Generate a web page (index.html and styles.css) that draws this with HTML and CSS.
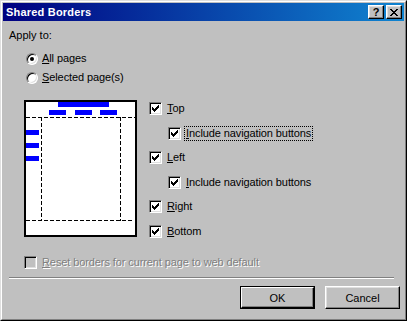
FILE: index.html
```html
<!DOCTYPE html>
<html>
<head>
<meta charset="utf-8">
<link rel="stylesheet" href="styles.css">
</head>
<body>
<div class="window">
  <div class="frame">
    <div class="titlebar">
      <span class="title">Shared Borders</span>
      <div class="tb-buttons">
        <span class="tb-btn help">?</span>
        <span class="tb-btn close"><svg width="8" height="7" viewBox="0 0 8 7" shape-rendering="crispEdges"><path d="M0 0h2v1h-2zM6 0h2v1h-2zM1 1h2v1h-2zM5 1h2v1h-2zM2 2h4v1h-4zM3 3h2v1h-2zM2 4h4v1h-4zM1 5h2v1h-2zM5 5h2v1h-2zM0 6h2v1h-2zM6 6h2v1h-2z" fill="#000"/></svg></span>
      </div>
    </div>
    <div class="client">
      <div class="label">Apply to:</div>
      <div class="radios">
        <div class="row"><span class="radio checked"></span><span class="txt"><u>A</u>ll pages</span></div>
        <div class="row"><span class="radio"></span><span class="txt"><u>S</u>elected page(s)</span></div>
      </div>
      <div class="main">
        <div class="preview">
          <div class="bar big"></div>
          <div class="bar sm s1"></div>
          <div class="bar sm s2"></div>
          <div class="bar sm s3"></div>
          <div class="hd top"></div>
          <div class="hd bottom"></div>
          <div class="vd left"></div>
          <div class="vd right"></div>
          <div class="bar lb l1"></div>
          <div class="bar lb l2"></div>
          <div class="bar lb l3"></div>
        </div>
        <div class="checks">
          <div class="row r1"><span class="cb on"></span><span class="txt"><u>T</u>op</span></div>
          <div class="row r2 indent"><span class="cb on"></span><span class="txt focus"><u>I</u>nclude navigation buttons</span></div>
          <div class="row r3"><span class="cb on"></span><span class="txt"><u>L</u>eft</span></div>
          <div class="row r4 indent"><span class="cb on"></span><span class="txt"><u>I</u>nclude navigation buttons</span></div>
          <div class="row r5"><span class="cb on"></span><span class="txt"><u>R</u>ight</span></div>
          <div class="row r6"><span class="cb on"></span><span class="txt"><u>B</u>ottom</span></div>
        </div>
      </div>
      <div class="row reset"><span class="cb disabled"></span><span class="txt dis"><u>R</u>eset borders for current page to web default</span></div>
      <div class="separator"></div>
      <div class="buttons">
        <div class="btn default"><span class="btn-in">OK</span></div>
        <div class="btn"><span class="btn-in">Cancel</span></div>
      </div>
    </div>
  </div>
</div>
</body>
</html>
```
FILE: styles.css
```css
* { box-sizing: border-box; }
html, body { margin: 0; padding: 0; }
body {
  width: 407px; height: 321px; overflow: hidden;
  font-family: "Liberation Sans", Arial, sans-serif;
  font-size: 11px; color: #000; background: #c0c0c0;
}
.window {
  width: 407px; height: 321px;
  border: 1px solid; border-color: #dfdfdf #000 #000 #dfdfdf;
}
.frame {
  height: 100%;
  border: 1px solid; border-color: #fff #808080 #808080 #fff;
  padding: 1px; background: #c0c0c0;
}
.titlebar {
  height: 18px;
  background: linear-gradient(to right, #000080, #1084d0);
  display: flex; align-items: center; justify-content: space-between;
  padding: 0 2px 0 3px;
}
.title { color: #fff; font-weight: bold; font-size: 11px; letter-spacing: 0.2px; }
.tb-buttons { display: flex; gap: 2px; }
.tb-btn {
  width: 16px; height: 14px; background: #c0c0c0;
  border: 1px solid; border-color: #fff #000 #000 #fff;
  box-shadow: inset -1px -1px #808080, inset 1px 1px #dfdfdf;
  display: flex; align-items: center; justify-content: center;
  font-weight: bold; font-size: 11px; line-height: 12px;
}
.client { padding: 8px 0 0 6px; position: relative; height: 297px; }
.label { height: 13px; line-height: 13px; }
.txt { letter-spacing: -0.1px; }
.row { display: flex; align-items: center; height: 13px; line-height: 13px; white-space: nowrap; }
.radios { margin-top: 10px; padding-left: 17px; display: flex; flex-direction: column; gap: 6px; }
.radio {
  width: 12px; height: 12px; border-radius: 50%; flex: none;
  border: 1px solid; border-color: #808080 #fff #fff #808080;
  background: #fff;
  box-shadow: inset 1px 1px #000, inset -1px -1px #dfdfdf;
  margin-right: 4px; position: relative;
}
.radio.checked::after {
  content: ""; position: absolute; left: 3px; top: 3px;
  width: 4px; height: 4px; border-radius: 50%; background: #000;
}
.main { display: flex; margin-top: 16px; padding-left: 15px; }
.preview {
  width: 113px; height: 137px; border: 2px solid #000; background: #fff;
  position: relative; flex: none;
}
.bar { position: absolute; background: #0000ff; height: 5px; }
.big { left: 32px; top: 0; width: 51px; }
.sm { top: 8px; width: 17px; }
.s1 { left: 23px; } .s2 { left: 49px; } .s3 { left: 74px; }
.lb { left: 0; width: 13px; }
.l1 { top: 28px; } .l2 { top: 41px; } .l3 { top: 54px; }
.hd { position: absolute; left: 0; height: 1px;
  background: repeating-linear-gradient(to right, #000 0 4px, transparent 4px 6px); }
.hd.top { top: 15px; width: 109px; }
.hd.bottom { top: 118px; width: 107px; }
.vd { position: absolute; top: 15px; width: 1px; height: 104px;
  background: repeating-linear-gradient(to bottom, #000 0 4px, transparent 4px 6px); }
.vd.left { left: 15px; } .vd.right { left: 94px; }
.checks { margin-left: 12px; margin-top: 2px; display: flex; flex-direction: column; }
.r2, .r4, .r6 { margin-top: 12px; }
.r3, .r5 { margin-top: 11px; }
.indent { padding-left: 19px; }
.cb {
  width: 13px; height: 13px; flex: none; position: relative;
  border: 1px solid; border-color: #808080 #fff #fff #808080;
  box-shadow: inset 1px 1px #000, inset -1px -1px #dfdfdf;
  background: #fff; margin-right: 5px;
}
.cb.on::after {
  content: ""; position: absolute; left: 2px; top: 2px; width: 7px; height: 7px;
  background:
    linear-gradient(#000,#000) 0 2px / 1px 3px no-repeat,
    linear-gradient(#000,#000) 1px 3px / 1px 3px no-repeat,
    linear-gradient(#000,#000) 2px 4px / 1px 3px no-repeat,
    linear-gradient(#000,#000) 3px 3px / 1px 3px no-repeat,
    linear-gradient(#000,#000) 4px 2px / 1px 3px no-repeat,
    linear-gradient(#000,#000) 5px 1px / 1px 3px no-repeat,
    linear-gradient(#000,#000) 6px 0 / 1px 3px no-repeat;
}
.cb.disabled { background: #c0c0c0; }
.focus { outline: 1px dotted #000; outline-offset: 0; padding: 0 1px; margin-left: -1px; }
.reset { margin-top: 18px; padding-left: 15px; }
.dis { color: #808080; text-shadow: 1px 1px #fff; }
.separator { margin-top: 8px; width: 385px; height: 2px; border-top: 1px solid #808080; border-bottom: 1px solid #fff; }
.buttons { margin-top: 7px; display: flex; justify-content: flex-end; gap: 10px; padding-right: 4px; }
.btn {
  width: 75px; height: 23px; background: #c0c0c0;
  border: 1px solid; border-color: #fff #000 #000 #fff;
  box-shadow: inset -1px -1px #808080, inset 1px 1px #dfdfdf;
  display: flex; align-items: center; justify-content: center;
}
.btn.default { border: 1px solid #000; padding: 0; box-shadow: none; }
.btn.default .btn-in {
  width: 73px; height: 21px;
  border: 1px solid; border-color: #fff #000 #000 #fff;
  box-shadow: inset -1px -1px #808080;
  display: flex; align-items: center; justify-content: center;
}
```
